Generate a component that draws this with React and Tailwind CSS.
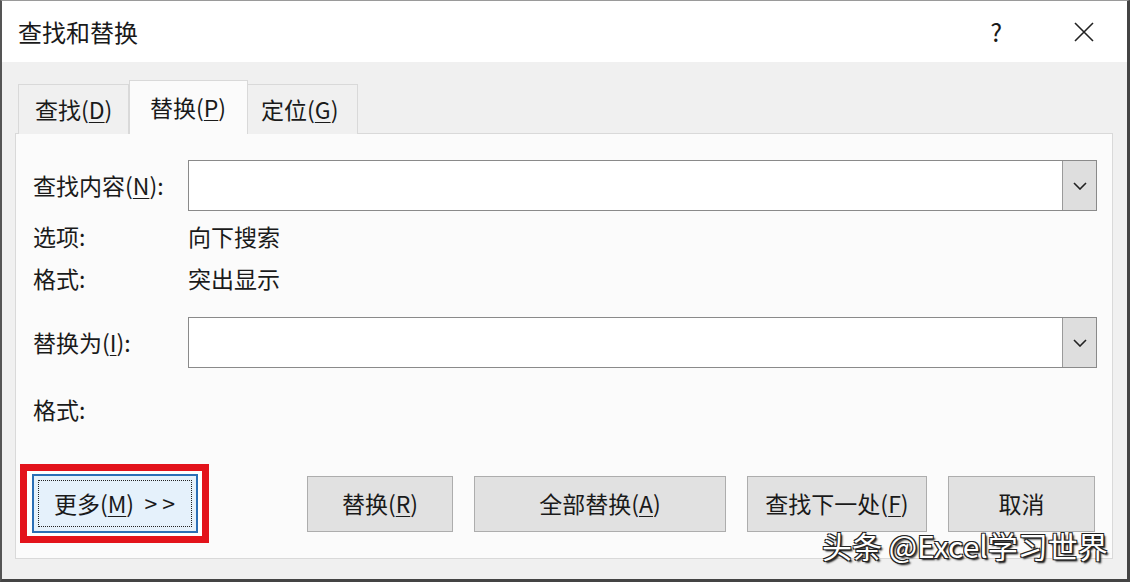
import React from "react";

const U = ({ children }) => <span className="underline underline-offset-[3px] decoration-1">{children}</span>;

function Chevron() {
  return (
    <svg width="14" height="8" viewBox="0 0 14 8" fill="none">
      <path d="M1 1 L7 7 L13 1" stroke="#222" strokeWidth="1.6" />
    </svg>
  );
}

function Combo() {
  return (
    <div className="flex h-[51px] w-[909px] border border-[#8a8a8a] bg-white">
      <div className="flex-1" />
      <div className="flex w-[34px] items-center justify-center border-l border-[#9a9a9a] bg-[#dedede]">
        <Chevron />
      </div>
    </div>
  );
}

function Btn({ w, children }) {
  return (
    <div
      className="flex h-[56px] items-center justify-center border border-[#adadad] bg-[#e1e1e1]"
      style={{ width: w }}
    >
      {children}
    </div>
  );
}

export default function App() {
  return (
    <div className="flex h-[582px] w-[1130px] flex-col border-t border-l-2 border-r-[3px] border-b-[3px] border-t-[#9a9a9a] border-l-[#555] border-r-[#444] border-b-[#444] bg-[#f0f0f0] font-['Noto_Sans_CJK_SC',sans-serif] text-[23px] text-[#1a1a1a]">
      {/* Title bar */}
      <div className="flex h-[61px] items-center bg-white pl-[16px]">
        <div className="text-[24px]">查找和替换</div>
        <div className="flex-1" />
        <div className="mr-[72px] text-[25px] leading-none">?</div>
        <svg className="mr-[33px]" width="20" height="20" viewBox="0 0 20 20">
          <path d="M1 1 L19 19 M19 1 L1 19" stroke="#222" strokeWidth="1.6" />
        </svg>
      </div>

      {/* Body */}
      <div className="flex flex-1 flex-col pl-[13px] pr-[14px] pt-[19px]">
        {/* Tabs */}
        <div className="relative z-10 flex h-[53px] items-end pl-[3px]">
          <div className="flex h-[50px] w-[111px] items-center border border-b-0 border-[#d9d9d9] bg-[#f0f0f0] pl-[16px]">
            查找(<U>D</U>)
          </div>
          <div className="flex h-[54px] w-[119px] items-center border border-b-0 border-[#d9d9d9] bg-[#fbfbfb] pl-[20px]">
            替换(<U>P</U>)
          </div>
          <div className="flex h-[50px] w-[110px] items-center border border-b-0 border-l-0 border-[#d9d9d9] bg-[#f0f0f0] pl-[13px]">
            定位(<U>G</U>)
          </div>
        </div>

        {/* Panel */}
        <div className="-mt-px flex h-[426px] flex-col border border-[#d9d9d9] bg-[#fbfbfb] pl-[17px] pr-[13px] pt-[26px]">
          <div className="flex items-center">
            <div className="w-[155px]">查找内容(<U>N</U>):</div>
            <Combo />
          </div>
          <div className="flex h-[42px] items-center mt-[4px]">
            <div className="w-[155px]">选项:</div>
            <div>向下搜索</div>
          </div>
          <div className="flex h-[42px] items-center">
            <div className="w-[155px]">格式:</div>
            <div>突出显示</div>
          </div>
          <div className="mt-[18px] flex items-center">
            <div className="w-[155px]">替换为(<U>I</U>):</div>
            <Combo />
          </div>
          <div className="mt-[20px] flex h-[42px] items-center">
            <div className="w-[155px]">格式:</div>
          </div>

          {/* Buttons */}
          <div className="relative mt-[34px] flex items-center">
            <div className="-ml-[13px] flex h-[79px] w-[189px] items-center justify-center border-[7px] border-[#e3131b] bg-white">
              <div className="flex h-[59px] w-[166px] items-center justify-center border-2 border-[#2b6fb6] bg-[#e5f1fb] p-[4px]">
                <div className="flex h-full w-full items-center justify-center border border-dotted border-[#222]">
                  更多(<U>M</U>)&nbsp;&nbsp;&gt; &gt;
                </div>
              </div>
            </div>
            <div className="ml-[98px] flex gap-[21px]">
              <Btn w={146}>替换(<U>R</U>)</Btn>
              <Btn w={252}>全部替换(<U>A</U>)</Btn>
              <Btn w={180}>查找下一处(<U>F</U>)</Btn>
              <Btn w={147}>取消</Btn>
            </div>
          </div>
        </div>
      </div>

      {/* Watermark */}
      <div className="pointer-events-none absolute left-[822px] top-[530px] text-[30px] leading-none text-white [text-shadow:1px_1px_0_#222,-1px_-1px_0_#222,1px_-1px_0_#222,-1px_1px_0_#222,2px_2px_2px_#000]">
        头条 @Excel学习世界
      </div>
    </div>
  );
}
